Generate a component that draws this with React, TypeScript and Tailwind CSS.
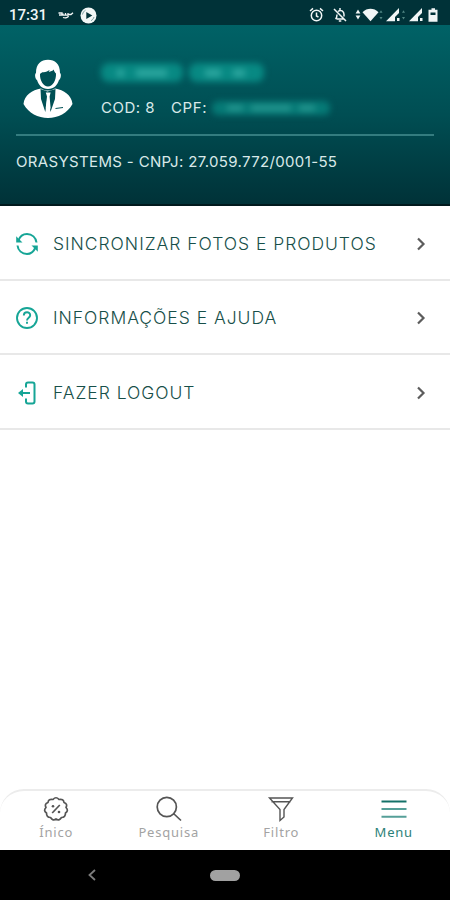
import { ReactNode } from "react";

const StatusBar = () => (
  <div className="flex items-center justify-between h-[25px] pt-[5px] pl-[9px] pr-[10px] bg-[#003238] text-[#f1f6f6]">
    <div className="flex items-center">
      <span className="font-['Roboto'] text-[15px] leading-5 font-medium">17:31</span>
      <svg className="ml-[11px]" width="16" height="10" viewBox="0 0 16 10" fill="none" stroke="currentColor" strokeWidth="1.3">
        <path d="M.5 3h3.500v2h-3M5 3.500v1.700h2.500V3v2.200H10V3M10.500 4.500H13l2-1.800M5 7.500c2.500.8 5 .2 5.500-1.500" />
      </svg>
      <svg className="ml-[6px]" width="17" height="17" viewBox="0 0 17 17">
        <circle cx="8.500" cy="8.500" r="8" fill="currentColor" />
        <path d="M6.300 4.900v7.200l6-3.600z" fill="#003238" />
        <path d="M2.500 7.500c.3-2 1.500-3.500 3-4.300M14 10c-.5 1.700-1.500 2.900-3 3.700" stroke="#7fa0a3" fill="none" />
      </svg>
    </div>
    <svg width="132" height="16" viewBox="0 0 132 16" fill="none" stroke="currentColor" strokeWidth="1.500">
      <circle cx="8.500" cy="8.500" r="5.200" />
      <path d="M8.500 5.500v3.500l2 1.200M2 4l3-2.600M15 4l-3-2.600" />
      <path d="M28.500 12h7M27.500 12c1.500-1.200 1.500-2.500 1.500-4.500M30 4.500c3-2.500 6 0 6 3v2M26 2l12 12M32 1v2M30.800 14h2.500" />
      <g fill="currentColor" stroke="none">
        <path d="M50 2.500l2.400 4h-4.800zM50 12.500l-2.400-4h4.800z" />
        <path d="M54.500 5.200c4.500-4.500 11.500-4.500 16 0l-8 9.100z" />
        <path d="M78 14.200L91 1v5l-4 4v4.200zM89 11h2.500v3H89z" />
        <path d="M101 14.200L114 1v5l-4 4v4.200zM112 11h2.500v3H112z" />
        <path d="M123.500 1.300h3.500v1.500h2.500v12h-9v-12h3z" />
      </g>
      <path d="M122.500 5.500h5v2.500h-5z" fill="#003238" stroke="none" />
      <path d="M71.500 5.700h3L73 3.200zM71.500 10h3L73 12.500zM94 5.700h3l-1.500-2.500zM94 10h3l-1.500 2.500z" fill="#4f8582" stroke="none" />
    </svg>
  </div>
);

const Avatar = () => (
  <svg width="50" height="60" viewBox="0 0 50 60" className="shrink-0">
    <path d="M13 14C13 5 18 .8 25 .8s12 4.200 12 13.200c1.500.5 1 6-1 7C34.500 26 31 30 25 30s-9.500-4-11-9c-2-1-2.500-6.500-1-7z" fill="#fff" />
    <path d="M17 15c1.500-1.800 2.500-2 3.500-1.800C23 13 25 12 26.500 11c0 .8-.3 1.500-.8 2 2.300-.4 4-1.200 5-2.500.3 1.800 1.300 3 2.300 4 .3 7-3.500 13-8 13s-8.300-6-8-12.500z" fill="#005055" />
    <path d="M18 29.500l4 2h6l4-2c9 1.500 16.500 6.500 17.500 15.500C44.500 54 35 59 25 59S5.500 54 .5 45C1.500 36 9 31 18 29.500z" fill="#fff" />
    <path d="M17.500 30l7 2.500 8-2.500-.5 10-4.500 13-2-15h-1l-2.200 15L18 40z" fill="#005055" />
    <path d="M22.800 33.500h4.800l-1 4 1 11.500-2.500 5.500-2.400-5.500 1.300-11.500z" fill="#fff" />
    <path d="M32.500 49.500l7.500-1" stroke="#005055" strokeWidth="1" />
  </svg>
);

const Header = () => (
  <header className="h-[181px] px-4 border-b-2 border-[#00191d] bg-linear-to-b from-[#006266] via-[#004e53] to-[#003238] text-[#d9e9e9]">
    <div className="flex h-[110.500px] pt-[34px] pl-[7px] border-b-2 border-[#347c7f]">
      <Avatar />
      <div className="ml-7">
        {/* hidden customer name */}
        <div className="flex gap-1.5 pt-[4px] blur-[3px]">
          <div className="flex items-center w-[82px] h-[19px] px-4 rounded-lg bg-[#078983] gap-3">
            <div className="w-2 h-2 bg-[#2ba59e]" />
            <div className="w-9 h-2 bg-[#2ba59e]" />
          </div>
          <div className="flex items-center w-[75px] h-[19px] px-4 rounded-lg bg-[#078983] gap-3">
            <div className="w-4 h-2 bg-[#2ba59e]" />
            <div className="w-3 h-2 bg-[#2ba59e]" />
          </div>
        </div>
        <div className="flex items-center mt-[16px] h-5 font-['Inter'] text-[15px] whitespace-nowrap">
          <span className="w-[55px] tracking-[0.5px]">COD: 8</span>
          <span className="w-[36px] ml-[15px] tracking-[0.6px]">CPF:</span>
          <div className="flex items-center justify-center gap-2 ml-[5px] w-[118px] h-[14px] rounded-md bg-[#057a76] blur-[3px]">
            <div className="w-4 h-1.5 bg-[#249690]" />
            <div className="w-10 h-1.5 bg-[#249690]" />
            <div className="w-4 h-1.5 bg-[#249690]" />
          </div>
        </div>
      </div>
    </div>
    <p className="mt-[16.500px] font-['Inter'] text-[15px] leading-5 tracking-[0.35px] whitespace-nowrap">
      ORASYSTEMS - CNPJ: 27.059.772/0001-55
    </p>
  </header>
);

const SyncIcon = () => (
  <svg width="22" height="24" viewBox="0 0 22 24" fill="none" stroke="#16a596" strokeWidth="2">
    <path d="M2.500 8.500C4 4 7.500 2 11 2c5 0 9 3.500 9.500 8.500M19.500 15.500c-2 4.500-5 6.500-8.500 6.500-5 0-9-3.500-9.500-8.500" />
    <path d="M.2 4.300v6.200h6.300zM21.800 19.700v-6.200h-6.300z" fill="#16a596" stroke="none" />
  </svg>
);

const HelpIcon = () => (
  <svg width="22" height="24" viewBox="0 0 22 24" fill="none" stroke="#16a596" strokeWidth="1.900">
    <circle cx="11" cy="12" r="10" />
    <path d="M7.800 9.500c0-4.300 6.400-4.300 6.400-.3 0 2.500-3.200 2.500-3.200 5.300M11 15.800v2" />
  </svg>
);

const LogoutIcon = () => (
  <svg width="22" height="24" viewBox="0 0 22 24" fill="none" stroke="#16a596" strokeWidth="2">
    <path d="M10 6.500V3.500c0-1.200.7-2 2-2h4.500c1.200 0 2 .8 2 2v17c0 1.200-.8 2-2 2H12c-1.300 0-2-.8-2-2v-3" />
    <path d="M14 12H4.500" />
    <path d="M2 12l5-4v8z" fill="#16a596" stroke="none" />
  </svg>
);

const MenuRow = ({ icon, children }: { icon: ReactNode; children: ReactNode }) => (
  <button className="flex items-center w-full h-[74.500px] pt-[3px] pl-4 pr-[23px] border-b-2 border-[#e8e8e8] text-left">
    {icon}
    <span className="ml-[15px] font-['Inter'] font-light text-[17.500px] tracking-[0.97px] text-[#174f49] whitespace-nowrap">
      {children}
    </span>
    <svg className="ml-auto" width="12" height="16" viewBox="0 0 12 16" fill="none" stroke="#5c5c5c" strokeWidth="2.200">
      <path d="M3 2.500L8.500 8 3 13.500" />
    </svg>
  </button>
);

const TabItem = ({ label, active, children }: { label: string; active?: boolean; children: ReactNode }) => (
  <button className={`flex flex-1 flex-col items-center pt-[4px] ${active ? "text-[#2c8179]" : "text-[#555555]"}`}>
    <svg width="28" height="28" viewBox="0 0 28 28" fill="none" stroke="currentColor" strokeWidth="1.700">
      {children}
    </svg>
    <span
      className={`font-['Noto_Sans'] text-[13px] leading-[18px] tracking-[0.8px] ${
        active ? "text-[#2c8179]" : "text-[#a3a3a3]"
      }`}
    >
      {label}
    </span>
  </button>
);

const TabBar = () => (
  <nav className="flex h-[61px] border-t-[2px] border-[#ececec] rounded-t-[24px] bg-white">
    <TabItem label="Ínico">
      <path d="M11 4.500Q14 1 17 4.500Q21.500 3.500 22 7.500Q26 9 24 12.500Q27 15.500 23.500 18Q23.500 22.500 19.500 22.500Q17 26.500 14 24Q11 26.500 8.500 22.500Q4.500 22.500 4.500 18Q1 15.500 4 12.500Q2 9 6 7.500Q6.500 3.500 11 4.500z" strokeLinejoin="round" />
      <path d="M17.800 10l-7.600 8" />
      <circle cx="11" cy="11.200" r="1.300" fill="currentColor" stroke="none" />
      <circle cx="17" cy="17" r="1.300" fill="currentColor" stroke="none" />
    </TabItem>
    <TabItem label="Pesquisa">
      <circle cx="11.800" cy="12" r="9.600" />
      <path d="M18.500 18.500l7.500 7" />
    </TabItem>
    <TabItem label="Filtro">
      <path d="M2.500 3h23L17 14.500V22l-4 3.500V14.500zM4.500 6.800h19" strokeWidth="1.400" />
    </TabItem>
    <TabItem label="Menu" active>
      <path d="M1.500 6.500h25" stroke="#147168" strokeWidth="2" />
      <path d="M1.500 14h25M1.500 21.700h25" stroke="#559f98" strokeWidth="2" />
    </TabItem>
  </nav>
);

const App = () => {
  return (
    <div className="flex flex-col w-[450px] h-[900px] overflow-hidden bg-white">
      <StatusBar />
      <Header />
      <main className="flex-1">
        <MenuRow icon={<SyncIcon />}>SINCRONIZAR FOTOS E PRODUTOS</MenuRow>
        <MenuRow icon={<HelpIcon />}>INFORMAÇÕES E AJUDA</MenuRow>
        <MenuRow icon={<LogoutIcon />}>FAZER LOGOUT</MenuRow>
      </main>
      <TabBar />
      <div className="flex items-center h-[50px] bg-black">
        <svg className="ml-[86px]" width="12" height="14" viewBox="0 0 12 14" fill="none" stroke="#7d7d7d" strokeWidth="1.800">
          <path d="M9 2L3.500 7 9 12" />
        </svg>
        <div className="ml-28 w-[30px] h-[11px] rounded-full bg-[#a1a1a1]" />
      </div>
    </div>
  );
};

export default App;
